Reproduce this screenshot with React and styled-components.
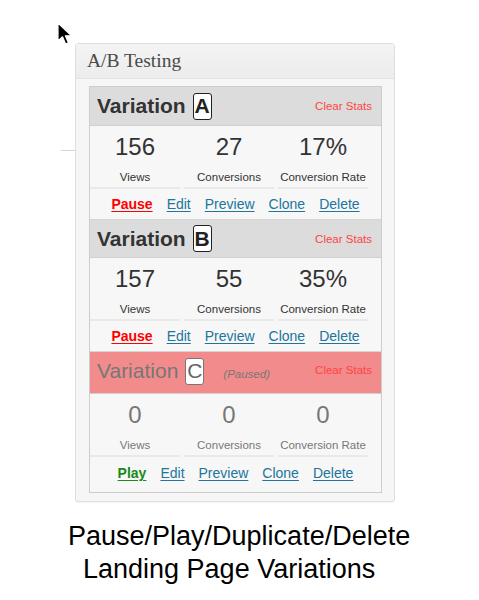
import React from "react"
import styled, { createGlobalStyle } from "styled-components"

const GlobalStyle = createGlobalStyle`
  html, body {
    margin: 0;
    padding: 0;
    background: #fff;
  }
  body {
    font-family: "Liberation Sans", Arial, sans-serif;
  }
`

const Page = styled.div`
  position: relative;
  width: 479px;
  height: 600px;
  padding-top: 43px;
  box-sizing: border-box;
`

const Cursor = styled.svg`
  position: absolute;
  left: 56px;
  top: 22px;
`

const StrayLine = styled.div`
  position: absolute;
  left: 61px;
  top: 150px;
  width: 14px;
  height: 1px;
  background: #d6d6d6;
`

const Widget = styled.div`
  margin-left: 75px;
  width: 320px;
  height: 459px;
  box-sizing: border-box;
  border: 1px solid #dfdfdf;
  border-radius: 3px;
  background: #f6f6f6;
  box-shadow: 0 1px 1px rgba(0, 0, 0, 0.04);
`

const WidgetTitle = styled.div`
  height: 34px;
  display: flex;
  align-items: center;
  padding-left: 11px;
  border-bottom: 1px solid #e2e2e2;
  background: linear-gradient(#f4f4f4, #ececec);
  font-family: "Liberation Serif", Georgia, serif;
  font-size: 19.5px;
  color: #4a4a4a;
`

const WidgetBody = styled.div`
  padding: 7px 12px 12px 13px;
`

const Box = styled.div`
  border: 1px solid #cdcdcd;
  background: #f7f7f7;
`

const Header = styled.div`
  height: ${({ $paused }) => ($paused ? "43px" : "39px")};
  display: flex;
  align-items: ${({ $paused }) => ($paused ? "flex-start" : "center")};
  padding: ${({ $paused }) => ($paused ? "4px 9px 0 7px" : "0 9px 0 7px")};
  box-sizing: border-box;
  background: ${({ $paused }) => ($paused ? "#f28b8b" : "#dcdcdc")};
  border-bottom: 1px solid #d0d0d0;
  border-top: ${({ $first }) => ($first ? "none" : "1px solid #d6d6d6")};
`

const Title = styled.span`
  font-size: 21px;
  font-weight: ${({ $paused }) => ($paused ? 400 : 700)};
  color: ${({ $paused }) => ($paused ? "#777" : "#333")};
`

const Letter = styled.span`
  display: inline-flex;
  align-items: center;
  justify-content: center;
  width: 19px;
  height: 27px;
  margin-left: 7px;
  box-sizing: border-box;
  border: 1.5px solid ${({ $paused }) => ($paused ? "#777" : "#222")};
  border-radius: 3px;
  background: #fff;
  font-size: 21px;
  font-weight: ${({ $paused }) => ($paused ? 400 : 700)};
  color: ${({ $paused }) => ($paused ? "#666" : "#222")};
`

const TitleGroup = styled.div`
  display: flex;
  align-items: center;
  height: 30px;
`

const PausedNote = styled.span`
  margin: 5px 0 0 19px;
  font-size: 11.5px;
  font-style: italic;
  color: #777;
`

const ClearStats = styled.a`
  margin-left: auto;
  align-self: ${({ $paused }) => ($paused ? "flex-start" : "center")};
  margin-top: ${({ $paused }) => ($paused ? "8px" : "0")};
  font-size: 11.5px;
  color: #f44;
  cursor: pointer;
`

const Stats = styled.div`
  display: grid;
  grid-template-columns: repeat(3, 90px);
  column-gap: 4px;
`

const Stat = styled.div`
  text-align: center;
  padding: 7px 0 3px;
  border-bottom: 2px solid #e9e9e9;
  color: ${({ $paused }) => ($paused ? "#777" : "#333")};
`

const Number = styled.div`
  font-size: 24px;
  line-height: 28px;
`

const Label = styled.div`
  margin-top: 9px;
  font-size: 11.5px;
  line-height: 14px;
`

const Actions = styled.div`
  height: ${({ $last }) => ($last ? "32px" : "30px")};
  display: flex;
  align-items: center;
  justify-content: center;
  gap: 14px;
  padding-bottom: ${({ $last }) => ($last ? "3px" : "0")};
`

const Action = styled.a`
  font-size: 14px;
  text-decoration: underline;
  text-underline-offset: 2px;
  cursor: pointer;
  color: ${({ $kind }) =>
    $kind === "pause" ? "#f00" : $kind === "play" ? "#1a8a1a" : "#21759b"};
  font-weight: ${({ $kind }) => ($kind === "pause" || $kind === "play" ? 700 : 400)};
`

const Caption = styled.div`
  margin-top: 18px;
  font-size: 27px;
  line-height: 33px;
  color: #000;
`

const CaptionLine = styled.div`
  padding-left: ${({ $indent }) => $indent}px;
`

const variations = [
  { letter: "A", views: 156, conversions: 27, rate: "17%", paused: false },
  { letter: "B", views: 157, conversions: 55, rate: "35%", paused: false },
  { letter: "C", views: 0, conversions: 0, rate: "0", paused: true },
]

const Variation = ({ v, index }) => (
  <>
    <Header $paused={v.paused} $first={index === 0}>
      <TitleGroup>
        <Title $paused={v.paused}>Variation</Title>
        <Letter $paused={v.paused}>{v.letter}</Letter>
        {v.paused && <PausedNote>(Paused)</PausedNote>}
      </TitleGroup>
      <ClearStats $paused={v.paused}>Clear Stats</ClearStats>
    </Header>
    <Stats>
      <Stat $paused={v.paused}>
        <Number>{v.views}</Number>
        <Label>Views</Label>
      </Stat>
      <Stat $paused={v.paused}>
        <Number>{v.conversions}</Number>
        <Label>Conversions</Label>
      </Stat>
      <Stat $paused={v.paused}>
        <Number>{v.rate}</Number>
        <Label>Conversion Rate</Label>
      </Stat>
    </Stats>
    <Actions $last={index === variations.length - 1}>
      {v.paused ? <Action $kind="play">Play</Action> : <Action $kind="pause">Pause</Action>}
      <Action>Edit</Action>
      <Action>Preview</Action>
      <Action>Clone</Action>
      <Action>Delete</Action>
    </Actions>
  </>
)

const App = () => (
  <>
    <GlobalStyle />
    <Page>
      <Cursor width="18" height="26" viewBox="0 0 18 26">
        <path
          d="M2 1 L2 19 L6.5 14.8 L9.6 22 L12.4 20.8 L9.4 13.8 L15.5 13.8 Z"
          fill="#000"
          stroke="#fff"
          strokeWidth="1.2"
          strokeLinejoin="round"
        />
      </Cursor>
      <StrayLine />
      <Widget>
        <WidgetTitle>A/B Testing</WidgetTitle>
        <WidgetBody>
          <Box>
            {variations.map((v, i) => (
              <Variation key={v.letter} v={v} index={i} />
            ))}
          </Box>
        </WidgetBody>
      </Widget>
      <Caption>
        <CaptionLine $indent={68}>Pause/Play/Duplicate/Delete</CaptionLine>
        <CaptionLine $indent={83}>Landing Page Variations</CaptionLine>
      </Caption>
    </Page>
  </>
)

export default App
